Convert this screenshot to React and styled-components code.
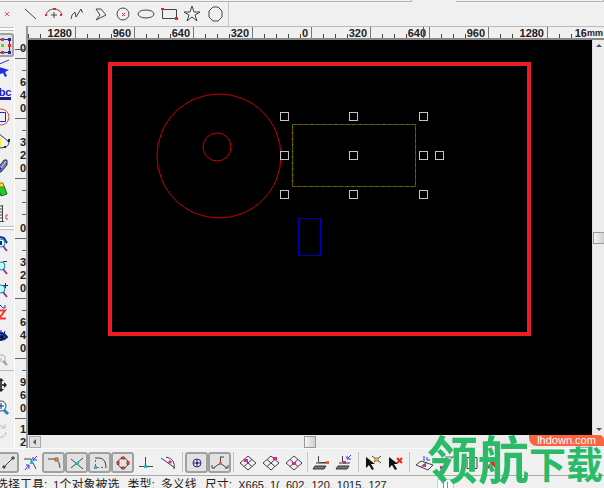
import React from "react";
import styled, { createGlobalStyle } from "styled-components";

/*
    Top edge
    Draw toolbar
    Tools - Ruler - Canvas - Scrollbars
    Snap toolbar
    Status bar
*/

const H_LABELS = ["1280", "960", "640", "320", "0", "320", "640", "960", "1280"];
const V_LABELS = ["960", "640", "320", "0", "320", "640", "960", "1280"];

const HANDLES = [
  [256, 76],
  [325, 76],
  [395, 76],
  [256, 115],
  [325, 115],
  [395, 115],
  [411, 115],
  [256, 154],
  [325, 154],
  [395, 154],
];

const DRAW_TOOLS = [
  {
    name: "Point",
    icon: <path d="M7 8l4 4M11 8l-4 4" stroke="#f05050" />,
  },
  { name: "Line", icon: <path d="M4 5l11 10" /> },
  {
    name: "Arc",
    icon: (
      <>
        <path d="M2 11c2-8 14-8 16 0M10 8v6M7 11h6" />
        <path d="M1 10h2v2H1zM9 4h3v2H9zM16 10h2v2h-2z" fill="#e22" stroke="none" />
      </>
    ),
  },
  { name: "Polyline", icon: <path d="M4 15l1-4 3-3 1 5 5-8 1 3h1" /> },
  { name: "Closed line", icon: <path d="M6 5h5l5 6-10 5 4-5z" /> },
  {
    name: "Circle",
    icon: (
      <>
        <circle cx="10" cy="10" r="6" />
        <path d="M9 9l3 3M12 9l-3 3" stroke="#e33" />
      </>
    ),
  },
  { name: "Ellipse", icon: <ellipse cx="10" cy="10" rx="8" ry="4" /> },
  {
    name: "Rectangle",
    icon: (
      <>
        <path d="M3.500 5.500h14v9h-14z" />
        <path d="M2 4h3v2H2zM16 13h3v3h-3z" fill="#e22" stroke="none" />
      </>
    ),
  },
  {
    name: "Star",
    icon: <path d="M10 2l2 6h6l-5 3 2 6-5-4-5 4 2-6-5-3h6z" />,
  },
  {
    name: "Polygon",
    icon: <path d="M8 3h5l4 4v6l-4 4H8l-4-4V7z" />,
  },
];

const EDIT_TOOLS = [
  {
    name: "Select",
    pressed: true,
    icon: (
      <>
        <path d="M4 4.500h13.500V17.500H4" stroke="#2424a8" />
        <path d="M9 3h3v3H9zM16 9h3v3h-3zM9 16h3v3H9z" fill="#f22" stroke="none" />
        <path d="M16 3h3v3h-3zM16 16h3v3h-3z" fill="#2424a8" stroke="none" />
        <path d="M9 9h3v3H9z" fill="#3e3" stroke="none" />
      </>
    ),
  },
  {
    name: "Node",
    icon: (
      <>
        <path d="M5 6l12-5" stroke="#33c" />
        <path d="M7 8l10 3-4 2 2 4-2 1-2-4-3 1z" fill="#1a2ee0" stroke="none" />
      </>
    ),
  },
  { name: "Text", text: "abc" },
  {
    name: "Weld",
    icon: (
      <>
        <circle cx="9" cy="10" r="8" stroke="#e44" />
        <path d="M4 5.500h9.500v9H4" stroke="#22c" />
      </>
    ),
  },
  {
    name: "Shape",
    icon: (
      <>
        <path d="M4 7h5v9H4z" fill="#fe3" stroke="none" />
        <path d="M6 2l10 8c2 3 0 7-9 7" stroke="#336" />
        <path d="M16 8h2v3h-2zM12 15h2v2h-2z" fill="#224" stroke="none" />
      </>
    ),
  },
  {
    name: "Knife",
    icon: (
      <>
        <path d="M6 13l6-8h3v5l-6 7H6z" fill="#77a" stroke="#335" />
        <path d="M9 13l5-7" stroke="#ccd" />
        <path d="M6 16l3-3" stroke="#22c" strokeWidth="2" />
      </>
    ),
  },
  {
    name: "Fill",
    icon: (
      <>
        <path d="M6 8l6-1 3 8-6 2z" fill="#2c2" stroke="#162" />
        <path d="M6 4h5l1 4H6z" fill="#fd3" stroke="#772" />
      </>
    ),
  },
  {
    name: "Measure",
    icon: (
      <>
        <path d="M10.500 2v17M6 3h4M8 6h2M6 9h4M8 12h2M6 15h4M6 18.500h6" />
        <path d="M16 12h-2v4h2" stroke="#e33" />
      </>
    ),
  },
];

const lens = (
  <>
    <circle cx="9" cy="9" r="4" fill="#bff" stroke="#189" />
    <path d="M11 12l4 5" stroke="#a2a" strokeWidth="2" />
  </>
);

const VIEW_TOOLS = [
  {
    name: "Zoom",
    icon: (
      <>
        <path d="M8 3l4 1 3 5" stroke="#228" strokeWidth="2" />
        {lens}
        <path d="M9 7v4" stroke="#228" strokeWidth="2" />
      </>
    ),
  },
  {
    name: "Zoom out",
    icon: (
      <>
        {lens}
        <path d="M11 4.500h4" stroke="#338" />
      </>
    ),
  },
  {
    name: "Zoom in",
    icon: (
      <>
        {lens}
        <path d="M11 5.500h5M13.500 3v5" stroke="#228" />
      </>
    ),
  },
  {
    name: "Zoom last",
    icon: (
      <>
        <path d="M5 7.500h8l-6 8h7" stroke="#f33" strokeWidth="2" />
        <path d="M8 2l3 3h2V2" stroke="#338" />
      </>
    ),
  },
  {
    name: "View",
    icon: (
      <>
        <path d="M3 11q6-8 12 0-6 6-12 0z" fill="#2367c9" stroke="#11207c" strokeWidth="2" />
        <path d="M9 4v3M13 5l-1 3" stroke="#11207c" />
        <circle cx="10" cy="11" r="2" fill="#112" stroke="none" />
      </>
    ),
  },
  {
    name: "Zoom object",
    icon: (
      <>
        <path d="M6 13V6h5l2 2v5M9 9v4" stroke="#aaa" />
        <path d="M11 12l4 4" stroke="#999" strokeWidth="2" />
      </>
    ),
  },
];

const PAN_TOOLS = [
  {
    name: "Pan",
    icon: (
      <>
        <path d="M9 5v10M4 10h9" strokeWidth="2" />
        <path d="M9 3l3 3H6zM9 17l3-3H6zM15 10l-3-3v6z" fill="#222" stroke="none" />
      </>
    ),
  },
  {
    name: "Zoom window",
    icon: (
      <>
        <circle cx="9" cy="8" r="5" fill="#dff" stroke="#345" />
        <path d="M9 5v6M6 8h6" stroke="#228" />
        <path d="M12 12l4 4" stroke="#28b" strokeWidth="3" />
      </>
    ),
  },
  {
    name: "Rotate view",
    icon: <path d="M12 6a6 6 0 1 0 2 5M13 3v4h-4" stroke="#bbb" />,
  },
];

const diamond = <path d="M10 3l8 7-8 7-8-7zM6 6.500l8 7M14 6.500l-8 7" stroke="#444" />;
const layers = <path d="M3 13h11l-2 3H1zM4 10h11" stroke="#333" fill="#777" />;
const pointer = <path d="M3 4v11l3-3 3 5 2-1-3-5h4z" fill="#111" stroke="none" />;

const SNAP_GROUPS = [
  [
    {
      name: "Snap to line",
      pressed: true,
      icon: (
        <>
          <path d="M6 14l9-9" />
          <path d="M14 4h2v2h-2zM5 13h2v2H5z" fill="#355" stroke="#444" />
        </>
      ),
    },
    {
      name: "Snap to near",
      icon: (
        <>
          <path d="M3 6h7l5 10" />
          <path d="M16 3l-4 4M12 4v3h4M4 17l4-5M5 12h3v4" stroke="#33e" />
          <path d="M9 8h3v3H9z" fill="#2bb" stroke="none" />
        </>
      ),
    },
    {
      name: "Snap to end",
      pressed: true,
      icon: (
        <>
          <path d="M4 6h8q4 3 4 9" />
          <path d="M11 5h3v3h-3z" fill="#f92" stroke="#a52" />
        </>
      ),
    },
    {
      name: "Snap to cross",
      pressed: true,
      icon: (
        <>
          <path d="M4 6l12 10M16 5L4 15" />
          <path d="M9 9h3v3H9z" fill="#2bb" stroke="none" />
        </>
      ),
    },
    {
      name: "Snap to center",
      pressed: true,
      icon: (
        <>
          <path d="M5 5h5q6 1 6 10" />
          <path d="M5.500 7v7M7 14.500h8" strokeDasharray="2 2" stroke="#666" />
          <path d="M4 13h3v3H4z" fill="#4aa" stroke="none" />
        </>
      ),
    },
    {
      name: "Snap to quadrant",
      pressed: true,
      icon: (
        <>
          <circle cx="10" cy="10" r="5" />
          <path
            d="M8.500 4h3v2h-3zM8.500 14h3v2h-3zM4 8.500h2v3H4zM14 8.500h2v3h-2z"
            fill="#d53"
            stroke="#a32"
          />
        </>
      ),
    },
    {
      name: "Snap perpendicular",
      icon: (
        <>
          <path d="M9.500 4v9M3 13.500h14" />
          <path d="M8 12h3v3H8z" fill="#2bb" stroke="none" />
        </>
      ),
    },
    {
      name: "Snap tangent",
      icon: (
        <>
          <path d="M2 5l14 10M7 4q10 2 8 12" />
          <path d="M10 8h2v2h-2z" fill="#d2a" stroke="#d2a" />
        </>
      ),
    },
  ],
  [
    {
      name: "Snap to grid",
      pressed: true,
      icon: (
        <>
          <circle cx="10" cy="10" r="4" fill="#dde" stroke="#336" />
          <path d="M10 6v8M6 10h8" stroke="#336" />
          <path d="M9 9h2v2H9z" fill="#229" stroke="none" />
        </>
      ),
    },
    {
      name: "Snap to axis",
      pressed: true,
      icon: (
        <>
          <path d="M10.500 4v6l-7 5M10 10l7 5M2 12v3h3M18 12v3h-3M10 4h4" />
          <path d="M9 9h3v3H9z" fill="#e62" stroke="none" />
        </>
      ),
    },
  ],
  [
    {
      name: "Grid corner",
      icon: (
        <>
          {diamond}
          <path d="M6 6h4v3H6z" fill="#d2a" stroke="none" />
        </>
      ),
    },
    {
      name: "Grid edge",
      icon: (
        <>
          {diamond}
          <path d="M12 4h4v3h-4z" fill="#d2a" stroke="none" />
        </>
      ),
    },
    {
      name: "Grid center",
      icon: (
        <>
          {diamond}
          <path d="M8 9h4v3H8z" fill="#d2a" stroke="none" />
        </>
      ),
    },
  ],
  [
    {
      name: "Layer edge",
      icon: (
        <>
          {layers}
          <path d="M6.500 3v6M7 9.500h8" />
          <path d="M14 8h3v3h-3z" fill="#d63" stroke="none" />
        </>
      ),
    },
    {
      name: "Layer move",
      icon: (
        <>
          {layers}
          <path d="M7.500 3v6" />
          <path d="M16 2l-4 4M12 3v3h4" stroke="#33e" />
          <path d="M8 8h3v3H8z" fill="#d2a" stroke="none" />
        </>
      ),
    },
  ],
  [
    {
      name: "Pick",
      icon: (
        <>
          {pointer}
          <path d="M9 3l9 7M18 3l-7 6" />
          <path d="M12 5h3v3h-3z" fill="#fc2" stroke="#a82" />
        </>
      ),
    },
    {
      name: "Unpick",
      icon: (
        <>
          {pointer}
          <path d="M11 5l5 5M16 5l-5 5" stroke="#e22" strokeWidth="2" />
        </>
      ),
    },
  ],
  [
    {
      name: "Plane",
      icon: (
        <>
          <path d="M2 12l5-4 12 4-5 5zM7 14l6-5" />
          <path d="M10 3v5M13 4v3h3" stroke="#33e" />
          <path d="M9 11h3v3H9z" fill="#d2a" stroke="none" />
        </>
      ),
    },
    {
      name: "Segment",
      icon: (
        <>
          <path d="M4 15L16 4M8 4h9" stroke="#666" />
          <path d="M3 13h3v3H3z" fill="#d2a" stroke="none" />
        </>
      ),
    },
    {
      name: "Properties",
      icon: <path d="M7 4.500h10v11H7zM9 7.500h6M9 10.500h6M9 13.500h6M2 10h4" />,
    },
    {
      name: "Delete",
      icon: <path d="M5 5l9 10M14 5l-9 10" stroke="#e22" strokeWidth="3" />,
    },
  ],
];

const Icon = ({ children }) => (
  <IconSvg viewBox="0 0 20 20" aria-hidden="true">
    {children}
  </IconSvg>
);

const Tools = ({ tools, size, height }) =>
  tools.map(({ name, pressed, icon, text }) => (
    <ToolButton
      key={name}
      type="button"
      aria-label={name}
      aria-pressed={!!pressed}
      $pressed={pressed}
      $width={size}
      $height={height}
    >
      {text ? <TextGlyph>{text}</TextGlyph> : <Icon>{icon}</Icon>}
    </ToolButton>
  ));

const Drawing = () => (
  <DrawingSvg role="img" aria-label="Drawing">
    <rect x="82" y="24" width="419" height="270" stroke="#ec1c24" strokeWidth="4" />
    <circle cx="191" cy="116" r="62" stroke="#c80000" />
    <circle cx="189" cy="107" r="14" stroke="#c80000" />
    <rect x="264.5" y="84.5" width="123" height="62" stroke="#b01400" />
    <rect
      x="264.5"
      y="84.5"
      width="123"
      height="62"
      stroke="#00a000"
      strokeDasharray="3 3"
    />
    <rect x="270.5" y="178.5" width="22" height="37" stroke="#0000b4" />
    {HANDLES.map(([x, y]) => (
      <rect
        key={`${x}-${y}`}
        x={x - 3.5}
        y={y - 3.5}
        width="8"
        height="8"
        stroke="#c4c4c4"
      />
    ))}
  </DrawingSvg>
);

const App = () => {
  return (
    <>
      <GlobalStyle />
      <Window>
        <TopEdge>
          <EdgePanel />
          <span />
          <EdgePanel />
        </TopEdge>
        <DrawBar role="toolbar" aria-label="Draw">
          <Tools tools={DRAW_TOOLS} size={23} height={24} />
          <Separator />
        </DrawBar>
        <Workspace>
          <Dock role="toolbar" aria-label="Edit" aria-orientation="vertical">
            <DockGrip />
            <Tools tools={EDIT_TOOLS} size={24} height={24} />
            <DockGrip />
            <Tools tools={VIEW_TOOLS} size={24} height={23} />
            <DockRule />
            <Tools tools={PAN_TOOLS} size={24} height={23} />
          </Dock>
          <SideRuler>
            <Corner />
            <SideScale>
              {V_LABELS.map((label, i) => (
                <SideCell key={i}>
                  <SideLabel>
                    {label.split("").map((digit, j) => (
                      <span key={j}>{digit}</span>
                    ))}
                  </SideLabel>
                </SideCell>
              ))}
            </SideScale>
            <SideCursor />
          </SideRuler>
          <Stage>
            <TopRuler>
              {H_LABELS.map((label, i) => (
                <TopCell key={i}>
                  <TopLabel>{label}</TopLabel>
                </TopCell>
              ))}
              <TopCell>
                <TopLabel>16</TopLabel>
                <Unit>mm</Unit>
              </TopCell>
              <TopCursor />
            </TopRuler>
            <StageRow>
              <Canvas>
                <Drawing />
              </Canvas>
              <VScroll>
                <ScrollButton type="button" aria-label="Scroll up">
                  <ArrowSvg viewBox="0 0 6 6">
                    <path d="M3 1l3 3H0z" />
                  </ArrowSvg>
                </ScrollButton>
                <Thumb />
                <ScrollButton type="button" aria-label="Scroll down">
                  <ArrowSvg viewBox="0 0 6 6">
                    <path d="M0 2h6L3 5z" />
                  </ArrowSvg>
                </ScrollButton>
              </VScroll>
            </StageRow>
            <HScroll>
              <ScrollButton type="button" aria-label="Scroll left" $raised>
                <ArrowSvg viewBox="0 0 6 6">
                  <path d="M4 0v6L1 3z" />
                </ArrowSvg>
              </ScrollButton>
              <Thumb />
              <ScrollButton type="button" aria-label="Scroll right" $raised>
                <ArrowSvg viewBox="0 0 6 6">
                  <path d="M2 0v6l3-3z" />
                </ArrowSvg>
              </ScrollButton>
            </HScroll>
          </Stage>
        </Workspace>
        <SnapBar role="toolbar" aria-label="Snap">
          {SNAP_GROUPS.map((tools, i) => (
            <React.Fragment key={i}>
              <Tools tools={tools} size={23} height={21} />
              <Separator />
            </React.Fragment>
          ))}
        </SnapBar>
        <StatusBar>
          <StatusPanel>
            <StatusItem>
              <span>选择工具:</span>
              <span>
                <Digits>1</Digits>个对象被选
              </span>
            </StatusItem>
            <StatusItem>
              <span>类型:</span>
              <span>多义线</span>
            </StatusItem>
            <StatusItem>
              <span>尺寸:</span>
              <Digits>X665, 1(</Digits>
            </StatusItem>
          </StatusPanel>
          <StatusNumbers>
            <Digits>602,</Digits>
            <Digits>120,</Digits>
            <Digits>1015,</Digits>
            <Digits>127</Digits>
          </StatusNumbers>
          <StatusGrip />
        </StatusBar>
        <Watermark>
          <BigMark>领航</BigMark>
          <MarkColumn>
            <MarkTag>lhdown.com</MarkTag>
            <SmallMark>下载</SmallMark>
          </MarkColumn>
        </Watermark>
      </Window>
    </>
  );
};

export default App;

const GlobalStyle = createGlobalStyle`
  * {
    box-sizing: border-box;
  }

  body {
    margin: 0;
    background: #f0f0f0;
    color: #222;
    font-family: "Liberation Sans", "Noto Sans CJK SC", sans-serif;
  }
`;

const Window = styled.div`
  position: relative;
  display: flex;
  flex-flow: column nowrap;
  height: 100vh;
  overflow: hidden;
`;

const TopEdge = styled.div`
  display: grid;
  grid-template-columns: 412fr 44fr 148fr;
  height: 2px;
`;

const EdgePanel = styled.div`
  border-right: 1px solid #bbb;
  border-bottom: 1px solid #b4b4b4;
`;

const DrawBar = styled.div`
  display: flex;
  flex: none;
  height: 24px;
  margin-left: -4px;
`;

const ToolButton = styled.button`
  display: flex;
  flex: none;
  align-items: center;
  justify-content: center;
  width: ${({ $width }) => $width}px;
  height: ${({ $height }) => $height}px;
  padding: 0;
  border: ${({ $pressed }) => ($pressed ? "2px solid #a0a0a0" : "none")};
  border-radius: 3px;
  background: ${({ $pressed }) => ($pressed ? "#e2e2e2" : "transparent")};
`;

const IconSvg = styled.svg`
  flex: none;
  width: 20px;
  height: 20px;
  fill: none;
  stroke: #444;
`;

const TextGlyph = styled.span`
  border-bottom: 3px solid #1c1c90;
  color: #1a1ac0;
  font-size: 11px;
  font-weight: 700;
  line-height: 10px;
`;

const Separator = styled.span`
  flex: none;
  width: 1px;
  margin: 0 2px;
  background: #c4c4c4;
`;

const Workspace = styled.div`
  display: flex;
  flex: 1;
  min-height: 0;
`;

const Dock = styled.div`
  display: flex;
  flex-flow: column nowrap;
  align-items: flex-end;
  flex: none;
  width: 15px;
  overflow: hidden;
  border-right: 1px solid #fff;
`;

const DockGrip = styled.div`
  flex: none;
  width: 100%;
  height: 4px;
  margin: 1px 0 2px;
  border-top: 1px solid #c0c0c0;
  border-bottom: 1px solid #c0c0c0;
  background: #fff;
`;

const DockRule = styled.div`
  flex: none;
  width: 100%;
  height: 1px;
  margin: 0 0 2px;
  background: #b8b8b8;
`;

const SideRuler = styled.div`
  position: relative;
  display: flex;
  flex-flow: column nowrap;
  flex: none;
  width: 13px;
  overflow: hidden;
  border-right: 2px solid #999;
`;

const Corner = styled.div`
  flex: none;
  height: 14px;
`;

const SideScale = styled.div`
  display: flex;
  flex-flow: column nowrap;
  justify-content: flex-start;
  flex: 1;
  min-height: 0;
  overflow: hidden;

  > :first-child {
    margin-top: -41px;
  }
`;

const SideCell = styled.div`
  display: flex;
  flex: none;
  align-items: flex-end;
  justify-content: flex-end;
  height: 60px;
  padding-bottom: 3px;
  border-bottom: 1px solid #666;
  background: repeating-linear-gradient(transparent 0 11px, #666 11px 12px) right
    top / 4px 100% no-repeat;
`;

const SideLabel = styled.div`
  display: flex;
  flex-flow: column nowrap;
  background: #f0f0f0;
  font-size: 11px;
  font-weight: 700;
  line-height: 13px;
`;

const SideCursor = styled.div`
  position: absolute;
  top: 23px;
  right: 0;
  width: 12px;
  height: 1px;
  background: #555;
`;

const Stage = styled.div`
  display: flex;
  flex-flow: column nowrap;
  flex: 1;
  min-width: 0;
`;

const TopRuler = styled.div`
  position: relative;
  display: flex;
  flex: none;
  height: 14px;
  overflow: hidden;
  border-top: 1px solid #bbb;
  border-bottom: 2px solid #888;

  > :first-child {
    margin-left: -11px;
  }
`;

const TopCell = styled.div`
  display: flex;
  flex: none;
  align-items: flex-end;
  justify-content: flex-end;
  width: 59px;
  padding-right: 3px;
  border-right: 1px solid #777;
  background: repeating-linear-gradient(to right, transparent 0 11px, #444 11px 12px)
    left bottom / 100% 4px no-repeat;
`;

const TopLabel = styled.span`
  background: #f0f0f0;
  font-size: 11px;
  font-weight: 700;
  line-height: 10px;
`;

const TopCursor = styled.div`
  position: absolute;
  top: 0;
  left: 395px;
  width: 1px;
  height: 100%;
  background: #555;
`;

const Unit = styled(TopLabel)`
  font-size: 9px;
`;

const StageRow = styled.div`
  display: flex;
  flex: 1;
  min-height: 0;
`;

const Canvas = styled.main`
  flex: 1;
  min-width: 0;
  background: #000;
`;

const DrawingSvg = styled.svg`
  display: block;
  width: 100%;
  height: 100%;
  fill: none;
`;

const VScroll = styled.div`
  display: flex;
  flex-flow: column nowrap;
  align-items: center;
  justify-content: space-between;
  flex: none;
  width: 12px;
  border-left: 1px solid #ddd;
  background: #ececec;
`;

const HScroll = styled.div`
  display: flex;
  align-items: center;
  justify-content: space-between;
  flex: none;
  height: 13px;
  padding: 0 13px 0 1px;
  background: #ececec;
`;

const ScrollButton = styled.button`
  display: flex;
  align-items: center;
  justify-content: center;
  width: 12px;
  height: 12px;
  padding: 0;
  border: ${({ $raised }) => ($raised ? "1px solid #aaa" : "none")};
  background: ${({ $raised }) => ($raised ? "#e0e0e0" : "transparent")};
`;

const ArrowSvg = styled.svg`
  width: 6px;
  height: 6px;
  fill: #555;
`;

const Thumb = styled.div`
  width: 12px;
  height: 12px;
  border: 1px solid #999;
  background: linear-gradient(to right, #f4f4f4, #cfcfcf);
`;

const SnapBar = styled.div`
  display: flex;
  flex: none;
  height: 28px;
  margin-left: -4px;
  padding: 3px 0;
  border-top: 1px solid #fafafa;
  border-bottom: 1px solid #aaa;
`;

const StatusBar = styled.footer`
  display: flex;
  flex: none;
  height: 12px;
  overflow: hidden;
  font-size: 12px;
  line-height: 18px;
  white-space: nowrap;
`;

const StatusPanel = styled.div`
  display: flex;
  flex: none;
  gap: 8px;
  width: 286px;
  margin-left: -4px;
  overflow: hidden;
`;

const StatusItem = styled.span`
  display: flex;
  gap: 6px;
`;

const StatusNumbers = styled.div`
  display: flex;
  flex: none;
  gap: 4px;
  width: 155px;
  padding-left: 4px;
`;

const Digits = styled.span`
  font-size: 11px;
`;

const StatusGrip = styled.div`
  width: 17px;
  height: 12px;
  margin-top: 3px;
  border: 1px solid #ccc;
  background: linear-gradient(to right, #888 0 1px, #fff 1px 4px, #888 4px 5px) center
    2px / 5px 8px no-repeat #fafafa;
`;

const Watermark = styled.div`
  position: absolute;
  right: 0;
  bottom: 8px;
  display: flex;
  align-items: flex-end;
  height: 45px;
  color: #2aba68;
  font-family: "Noto Sans CJK SC", sans-serif;
  font-weight: 700;
  white-space: nowrap;
  pointer-events: none;
`;

const BigMark = styled.span`
  font-size: 51px;
  line-height: 45px;
`;

const MarkColumn = styled.div`
  display: flex;
  flex-flow: column nowrap;
  justify-content: space-between;
  width: 75px;
  height: 45px;
`;

const MarkTag = styled.span`
  height: 11px;
  border-radius: 0 5px 0 8px;
  background: #fa6440;
  color: #fff;
  font-family: "Liberation Sans", sans-serif;
  font-size: 11px;
  font-weight: 400;
  line-height: 11px;
  text-align: center;
`;

const SmallMark = styled.span`
  font-size: 37px;
  line-height: 34px;
`;
